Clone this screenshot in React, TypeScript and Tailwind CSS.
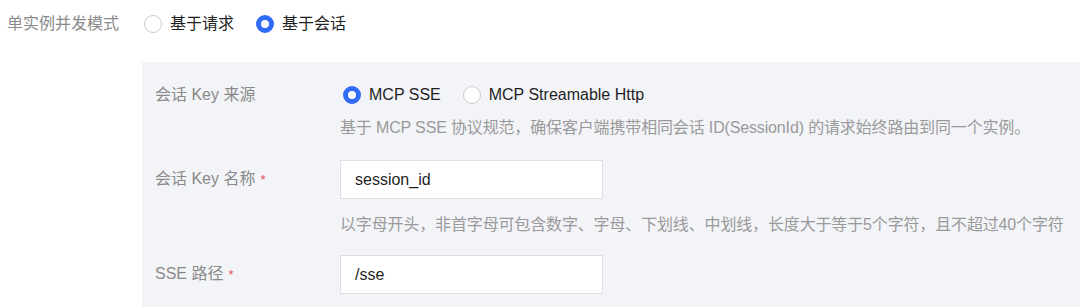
import type { ReactNode } from "react";

const FONT = {
  fontFamily: '"Liberation Sans", "Noto Sans CJK SC", sans-serif',
};

function Radio({ checked, label }: { checked: boolean; label: string }) {
  return (
    <label className="flex items-center gap-[8px] cursor-pointer">
      {checked ? (
        <span className="box-border h-[18px] w-[18px] rounded-full border-[5px] border-[#2f6bf5] bg-white" />
      ) : (
        <span className="box-border h-[18px] w-[18px] rounded-full border border-[#c9ccd4] bg-white" />
      )}
      <span className="text-[16px] leading-[22px] text-[#1f1f1f]">{label}</span>
    </label>
  );
}

function Row({
  label,
  required,
  children,
}: {
  label: string;
  required?: boolean;
  children: ReactNode;
}) {
  return (
    <div className="flex items-center">
      <div className="w-[185px] shrink-0 text-[16px] leading-[22px] text-[#8a8a8a]">
        {label}
        {required && <span className="ml-[5px] text-[13px] text-[#e34d59]">*</span>}
      </div>
      {children}
    </div>
  );
}

function Hint({ children }: { children: ReactNode }) {
  return (
    <p className="ml-[185px] text-[16px] leading-[22px] tracking-[-0.15px] text-[#9a9a9a] whitespace-nowrap">
      {children}
    </p>
  );
}

function TextInput({ value }: { value: string }) {
  return (
    <input
      readOnly
      value={value}
      className="box-border h-[39px] w-[263px] border border-[#dcdfe6] bg-white px-[14px] text-[16px] text-[#1f1f1f] outline-none"
      style={FONT}
    />
  );
}

export default function App() {
  return (
    <div className="h-[307px] w-[1080px] overflow-hidden bg-white" style={FONT}>
      {/* 顶部：并发模式 */}
      <div className="flex h-[48px] items-center">
        <div className="w-[144px] shrink-0 pl-[7px] text-[16px] leading-[22px] text-[#8a8a8a]">
          单实例并发模式
        </div>
        <div className="flex items-center gap-[22px]">
          <Radio checked={false} label="基于请求" />
          <Radio checked label="基于会话" />
        </div>
      </div>

      {/* 会话配置面板 */}
      <div className="ml-[142px] mt-[14px] h-[260px] bg-[#f3f4f8] pl-[13px] pt-[22px]">
        <Row label="会话 Key 来源">
          <div className="ml-[3px] flex items-center gap-[22px]">
            <Radio checked label="MCP SSE" />
            <Radio checked={false} label="MCP Streamable Http" />
          </div>
        </Row>
        <div className="mt-[11px]">
          <Hint>
            基于 MCP SSE 协议规范，确保客户端携带相同会话 ID(SessionId) 的请求始终路由到同一个实例。
          </Hint>
        </div>

        <div className="mt-[21px]">
          <Row label="会话 Key 名称" required>
            <TextInput value="session_id" />
          </Row>
        </div>
        <div className="mt-[15px]">
          <Hint>
            以字母开头，非首字母可包含数字、字母、下划线、中划线，长度大于等于5个字符，且不超过40个字符
          </Hint>
        </div>

        <div className="mt-[19px]">
          <Row label="SSE 路径" required>
            <TextInput value="/sse" />
          </Row>
        </div>
      </div>
    </div>
  );
}
